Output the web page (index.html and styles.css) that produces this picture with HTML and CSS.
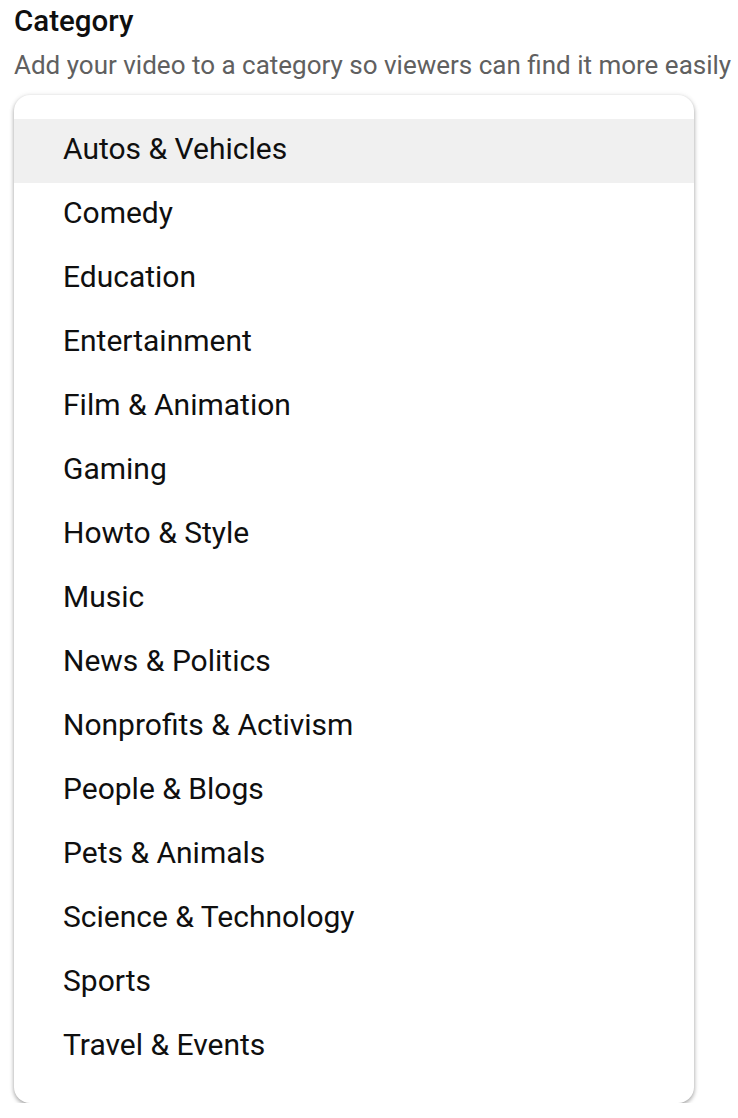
FILE: index.html
```html
<!DOCTYPE html>
<html>
<head>
    <title>Category</title>
    <link rel="stylesheet" href="styles.css">
</head>
<body>
    <div class="field">
        <h2 class="field-title">Category</h2>
        <p class="field-hint">Add your video to a category so viewers can find it more easily</p>
        <ul class="menu">
            <li class="menu-item selected">Autos &amp; Vehicles</li>
            <li class="menu-item">Comedy</li>
            <li class="menu-item">Education</li>
            <li class="menu-item">Entertainment</li>
            <li class="menu-item">Film &amp; Animation</li>
            <li class="menu-item">Gaming</li>
            <li class="menu-item">Howto &amp; Style</li>
            <li class="menu-item">Music</li>
            <li class="menu-item">News &amp; Politics</li>
            <li class="menu-item">Nonprofits &amp; Activism</li>
            <li class="menu-item">People &amp; Blogs</li>
            <li class="menu-item">Pets &amp; Animals</li>
            <li class="menu-item">Science &amp; Technology</li>
            <li class="menu-item">Sports</li>
            <li class="menu-item">Travel &amp; Events</li>
        </ul>
    </div>
</body>
</html>
```

FILE: styles.css
```css
body {
    font-family: Roboto, "Noto Sans", Arial, sans-serif;
    background-color: white;
    color: #0f0f0f;
    margin: 0;
    padding: 3px 0 0 14px;
}

.field-title {
    font-size: 29.5px;
    font-weight: 500;
    line-height: 36px;
    margin: 0;
}

.field-hint {
    font-size: 26px;
    line-height: 36px;
    color: #606060;
    margin: 8px 0 12px;
    white-space: nowrap;
}

.menu {
    list-style: none;
    width: 680px;
    margin: 0;
    padding: 24px 0;
    background-color: white;
    border-radius: 16px;
    box-shadow: 0 2px 4px rgba(0,0,0,0.35), 0 0 6px rgba(0,0,0,0.06);
}

.menu-item {
    font-size: 30px;
    line-height: 60px;
    height: 60px;
    padding: 0 0 4px 49px;
}

.menu-item.selected {
    background-color: #f0f0f0;
}
```
